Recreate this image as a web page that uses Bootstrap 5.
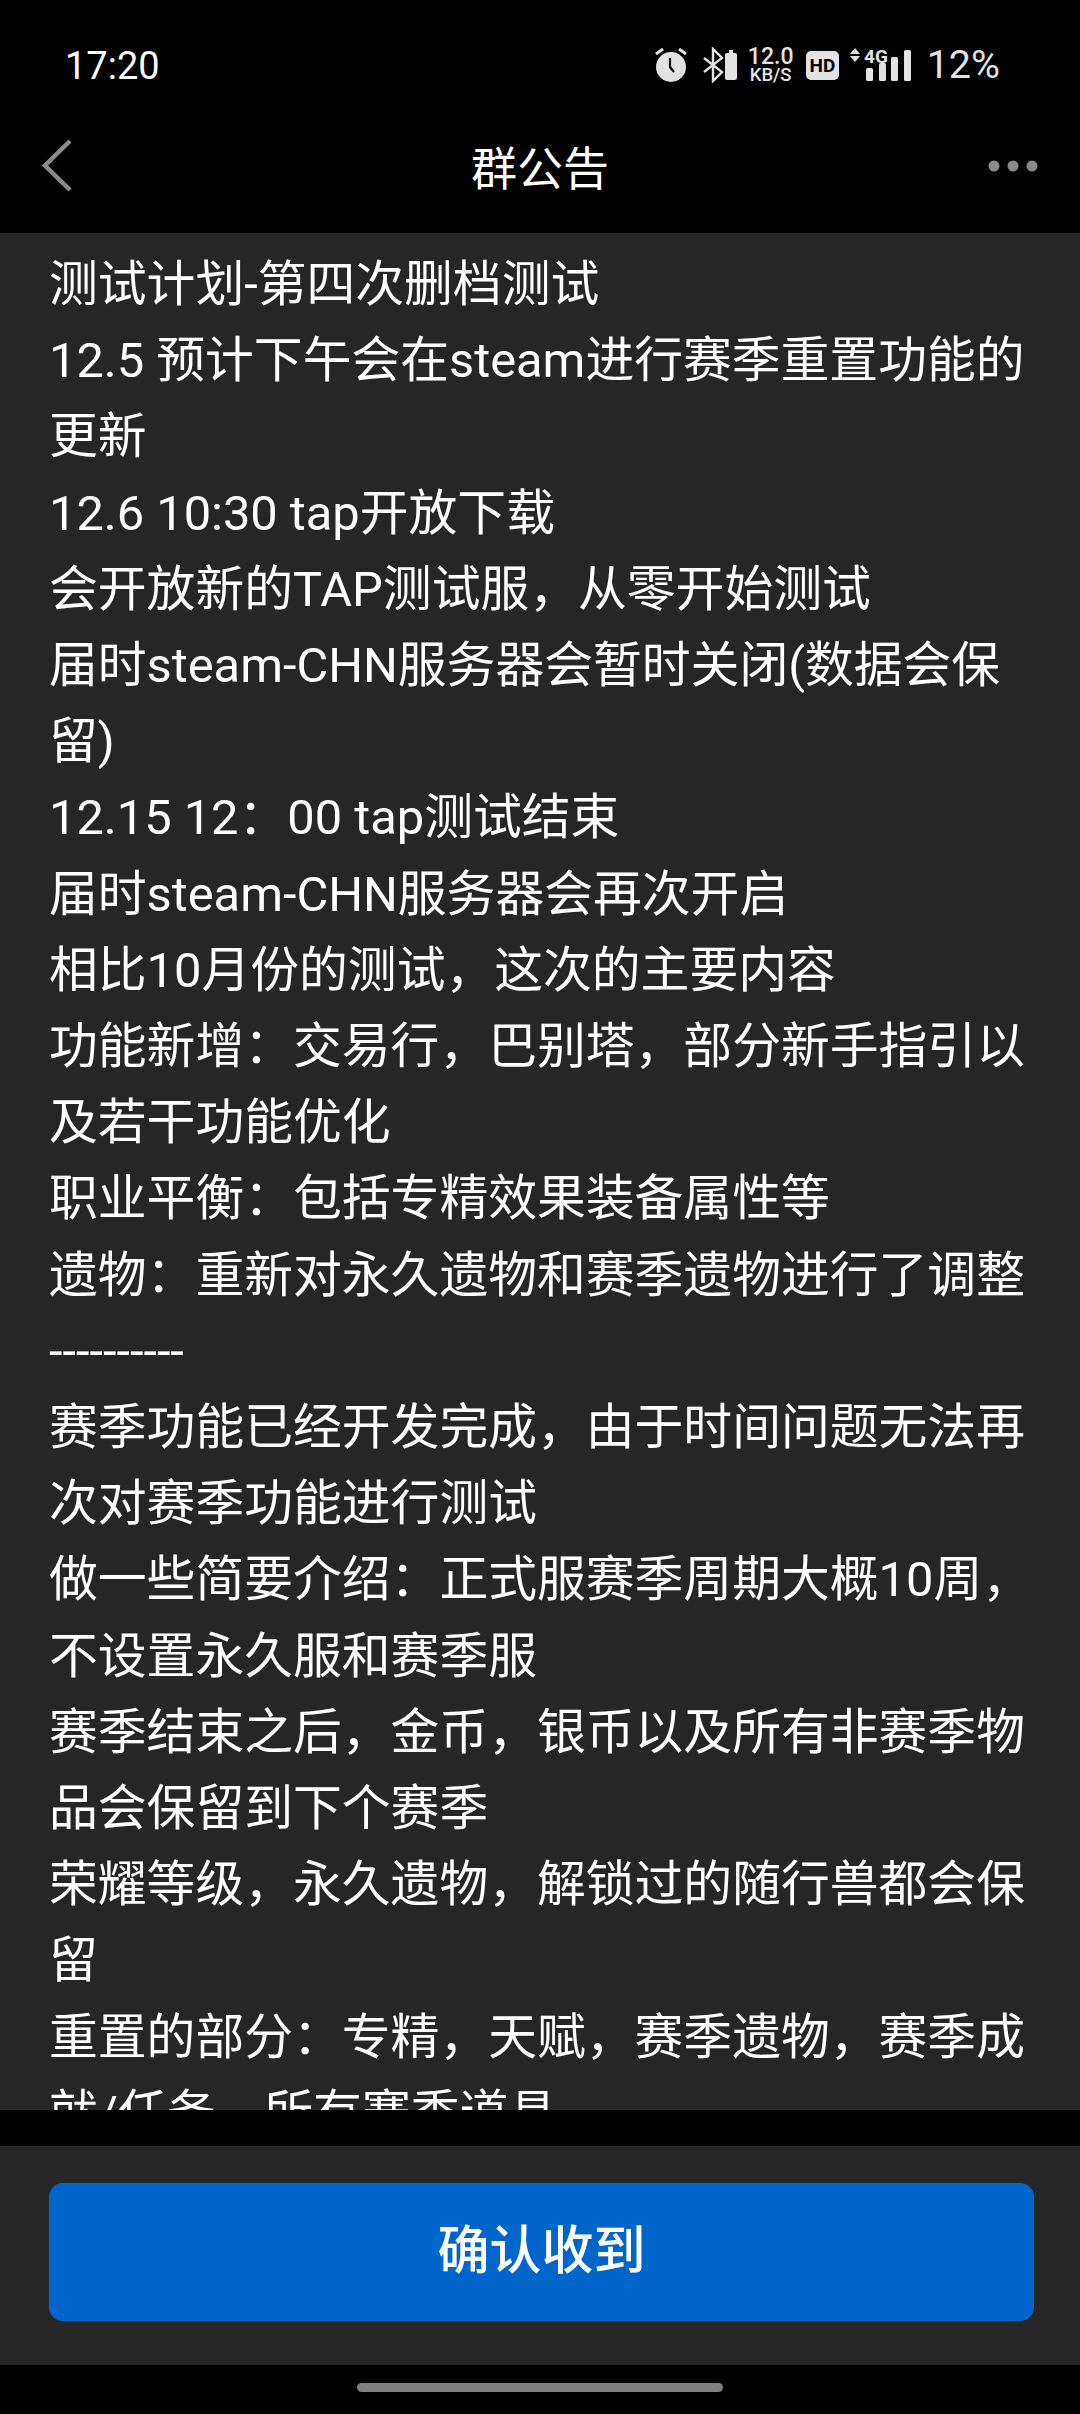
<!DOCTYPE html>
<html lang="zh"><head><meta charset="utf-8">
<link rel="stylesheet" href="https://cdn.jsdelivr.net/npm/bootstrap@5.3.0/dist/css/bootstrap.min.css">
<style>
html,body{background:#000;margin:0;height:2414px;overflow:hidden}
body{font-family:Roboto,"Noto Sans CJK SC",sans-serif;color:#fff}
.shell{height:2414px}
.statusbar{height:112px;padding:18px 80px 0 65px;color:#e2e2e2}
.clock{font-size:38px;color:#fff;line-height:1;margin-top:2px}
.pct{font-size:39.5px;line-height:1;margin-left:15px}
.speed{width:46px;font-size:23px;line-height:20px;font-weight:500;text-align:center;margin-left:11px;white-space:nowrap}
.speed span{display:block;font-size:18.5px;line-height:16px}
.ic-bt{margin-left:14px}.ic-batt{margin-left:1px}.ic-hd{margin-left:12px}.ic-sig{margin-left:11px}
.titlebar{height:121px}
.titletext{font-size:46px;line-height:1;left:0;right:0;top:34px;text-align:center}
.back{left:42px;top:27px}
.dots{right:42px;top:48px}
.notice{height:1877px;background:#262626;padding:14px 35px 0 49px;overflow:hidden;font-size:48.8px;line-height:76.2px}
.gap-band{height:36px}
.footbar{height:219px;background:#262626;padding:37px 46px 0 49px}
.okbtn{height:138px;background:#0066cc;border:0;border-radius:14px;font-size:52px;font-weight:500;color:#fff}
.okbtn:hover{background:#0066cc;color:#fff}
.homebar{height:49px;padding-top:18px}
.homepill{width:366px;height:9px;border-radius:5px;background:#808080}
</style></head>
<body>
<div class="shell d-flex flex-column">
  <div class="statusbar d-flex align-items-center justify-content-between">
    <div class="clock">17:20</div>
    <div class="d-flex align-items-center">
      <svg width="34" height="36" viewBox="0 0 34 36"><circle cx="17" cy="20" r="15" fill="#e2e2e2"/><path d="M2 7 9 2M32 7 25 2" stroke="#e2e2e2" stroke-width="3" fill="none"/><path d="M16 11v9l4 5" stroke="#000" stroke-width="2.2" fill="none"/></svg>
      <svg class="ic-bt" width="22" height="36" viewBox="0 0 22 36"><path d="M2 11 20 25 11 34V2l9 9L2 25" stroke="#e2e2e2" stroke-width="2.4" fill="none"/></svg>
      <svg class="ic-batt" width="12" height="30" viewBox="0 0 12 30"><path d="M4 0h4v3h2a2 2 0 0 1 2 2v23a2 2 0 0 1-2 2H2a2 2 0 0 1-2-2V5a2 2 0 0 1 2-2h2z" fill="#e2e2e2"/></svg>
      <div class="speed">12.0<span>KB/S</span></div>
      <svg class="ic-hd" width="33" height="29" viewBox="0 0 33 29"><rect width="33" height="29" rx="5" fill="#e2e2e2"/><text x="16.5" y="21" font-size="19" font-weight="700" font-family="Roboto" text-anchor="middle" fill="#000">HD</text></svg>
      <svg class="ic-sig" width="62" height="46" viewBox="0 -6 62 46"><path d="M5 0 10 6H0zM5 14 0 8h10z" fill="#e2e2e2"/><text x="14" y="15" font-size="19" font-weight="700" font-family="Roboto" fill="#e2e2e2">4G</text><rect x="16" y="20" width="7" height="13" rx="1.5" fill="#e2e2e2"/><rect x="29" y="15" width="7" height="18" rx="1.5" fill="#e2e2e2"/><rect x="41" y="9" width="7" height="24" rx="1.5" fill="#e2e2e2"/><rect x="54" y="2" width="7" height="31" rx="1.5" fill="#e2e2e2"/></svg>
      <div class="pct">12%</div>
    </div>
  </div>
  <div class="titlebar position-relative">
    <svg class="back position-absolute" width="32" height="53" viewBox="0 0 32 53"><path d="M28 2 3 26.5 28 51" stroke="#8a8a8a" stroke-width="4.5" fill="none"/></svg>
    <div class="titletext position-absolute">群公告</div>
    <svg class="dots position-absolute" width="50" height="12" viewBox="0 0 50 12"><circle cx="6" cy="6" r="5.5" fill="#8a8a8a"/><circle cx="25" cy="6" r="5.5" fill="#8a8a8a"/><circle cx="44" cy="6" r="5.5" fill="#8a8a8a"/></svg>
  </div>
  <div class="notice">
    <div>测试计划-第四次删档测试</div>
    <div>12.5 预计下午会在steam进行赛季重置功能的更新</div>
    <div>12.6 10:30 tap开放下载</div>
    <div>会开放新的TAP测试服，从零开始测试</div>
    <div>届时steam-CHN服务器会暂时关闭(数据会保留)</div>
    <div>12.15 12：00 tap测试结束</div>
    <div>届时steam-CHN服务器会再次开启</div>
    <div>相比10月份的测试，这次的主要内容</div>
    <div>功能新增：交易行，巴别塔，部分新手指引以及若干功能优化</div>
    <div>职业平衡：包括专精效果装备属性等</div>
    <div>遗物：重新对永久遗物和赛季遗物进行了调整</div>
    <div>----------</div>
    <div>赛季功能已经开发完成，由于时间问题无法再次对赛季功能进行测试</div>
    <div>做一些简要介绍：正式服赛季周期大概10周，不设置永久服和赛季服</div>
    <div>赛季结束之后，金币，银币以及所有非赛季物品会保留到下个赛季</div>
    <div>荣耀等级，永久遗物，解锁过的随行兽都会保留</div>
    <div>重置的部分：专精，天赋，赛季遗物，赛季成就/任务，所有赛季道具</div>
  </div>
  <div class="gap-band"></div>
  <div class="footbar"><button type="button" class="btn okbtn w-100">确认收到</button></div>
  <div class="homebar d-flex justify-content-center"><div class="homepill"></div></div>
</div>
<script src="https://cdn.jsdelivr.net/npm/bootstrap@5.3.0/dist/js/bootstrap.bundle.min.js"></script>
</body></html>
